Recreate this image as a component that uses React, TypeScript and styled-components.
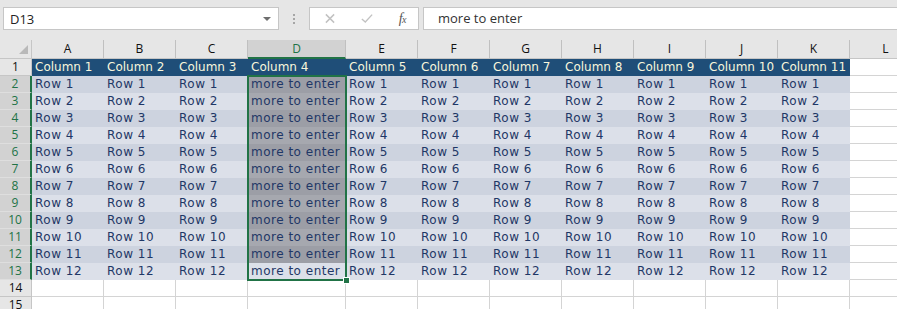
import styled, { createGlobalStyle } from "styled-components";

const GREEN = "#217346";

const GlobalStyle = createGlobalStyle`
  html, body {
    margin: 0;
    padding: 0;
    background: #ffffff;
    overflow: hidden;
  }
`;

const columns = ["A", "B", "C", "D", "E", "F", "G", "H", "I", "J", "K", "L"];
const tableColumns = 11;
const dataRows = 12;
const activeColumn = 3;

export default function App() {
  const rows = Array.from({ length: 15 }, (_, i) => i + 1);

  return (
    <>
      <GlobalStyle />
      <Window>
        <Toolbar>
          <NameBox>
            <NameText>D13</NameText>
            <DropArrow />
          </NameBox>
          <Splitter>
            <Dot />
            <Dot />
            <Dot />
          </Splitter>
          <FormulaButtons>
            <ToolIcon viewBox="0 0 12 12" aria-label={"Cancel"}>
              <path d="M1.5 1.5 L10.5 10.5 M10.5 1.5 L1.5 10.5" />
            </ToolIcon>
            <ToolIcon viewBox="0 0 14 12" aria-label={"Enter"}>
              <path d="M1 6.5 L5 10 L13 1.5" />
            </ToolIcon>
            <FxLabel>
              f<small>x</small>
            </FxLabel>
          </FormulaButtons>
          <FormulaInput>more to enter</FormulaInput>
        </Toolbar>

        <SheetArea>
          <Sheet>
            <Corner>
              <CornerTriangle />
            </Corner>
            {columns.map((c, i) => (
              <ColHeader key={c} $active={i === activeColumn}>
                {c}
              </ColHeader>
            ))}

            {rows.map((r) => {
              const inData = r >= 2 && r <= dataRows + 1;
              return [
                <RowHeader key={`h${r}`} $active={inData}>
                  {r}
                </RowHeader>,
                ...columns.map((c, ci) => {
                  const inTable = ci < tableColumns && r <= dataRows + 1;
                  if (!inTable) return <Cell key={`${c}${r}`} $tone={"blank"} />;
                  if (r === 1)
                    return (
                      <Cell key={`${c}${r}`} $tone={"head"}>
                        Column {ci + 1}
                      </Cell>
                    );
                  const tone = r % 2 === 0 ? "band1" : "band2";
                  const selected = ci === activeColumn && r !== dataRows + 1;
                  return (
                    <Cell key={`${c}${r}`} $tone={tone} $selected={selected}>
                      {ci === activeColumn ? "more to enter" : `Row ${r - 1}`}
                    </Cell>
                  );
                }),
              ];
            })}
          </Sheet>
          <Selection>
            <FillHandle />
          </Selection>
        </SheetArea>
      </Window>
    </>
  );
}

const Window = styled.div`
  width: 897px;
  height: 309px;
  overflow: hidden;
  background: #ffffff;
`;

const Toolbar = styled.div`
  height: 40px;
  box-sizing: border-box;
  padding: 7px 0 0 3px;
  display: flex;
  align-items: flex-start;
  background: #e6e6e6;
`;

const NameBox = styled.div`
  width: 276px;
  height: 23px;
  box-sizing: border-box;
  border: 1px solid #c6c6c6;
  background: #ffffff;
  display: flex;
  align-items: center;
  justify-content: space-between;
  padding: 0 7px 0 6px;
`;

const NameText = styled.span`
  font-family: "Open Sans", "Liberation Sans", sans-serif;
  font-size: 13px;
  color: #222222;
`;

const DropArrow = styled.span`
  width: 0;
  height: 0;
  border-left: 4px solid transparent;
  border-right: 4px solid transparent;
  border-top: 4px solid #6e6e6e;
  margin-top: 1px;
`;

const Splitter = styled.div`
  width: 30px;
  height: 23px;
  display: flex;
  flex-direction: column;
  align-items: center;
  justify-content: center;
  gap: 2px;
`;

const Dot = styled.span`
  width: 2px;
  height: 2px;
  background: #a6a6a6;
`;

const FormulaButtons = styled.div`
  width: 110px;
  height: 23px;
  box-sizing: border-box;
  border: 1px solid #c6c6c6;
  background: #ffffff;
  display: flex;
  align-items: center;
  justify-content: space-between;
  padding: 0 12px 0 14px;
`;

const ToolIcon = styled.svg`
  width: 12px;
  height: 11px;
  fill: none;
  stroke: #c2c2c2;
  stroke-width: 1.6;
`;

const FxLabel = styled.span`
  font-family: "Liberation Serif", serif;
  font-style: italic;
  font-size: 14px;
  color: #555555;
  letter-spacing: -0.5px;

  small {
    font-size: 10px;
  }
`;

const FormulaInput = styled.div`
  flex: 1;
  margin-left: 4px;
  height: 23px;
  box-sizing: border-box;
  border: 1px solid #c6c6c6;
  border-right: 0;
  background: #ffffff;
  padding-left: 14px;
  font-family: "Open Sans", "Liberation Sans", sans-serif;
  font-size: 13px;
  line-height: 21px;
  color: #333333;
`;

const SheetArea = styled.div`
  position: relative;
`;

const Sheet = styled.div`
  display: grid;
  grid-template-columns: 32px repeat(3, 72px) 98px repeat(7, 72px) 72px;
  grid-template-rows: 19px repeat(15, 17px);
  width: max-content;
`;

const Corner = styled.div`
  box-sizing: border-box;
  background: #e6e6e6;
  border-right: 1px solid #c6c6c6;
  border-bottom: 1px solid #c6c6c6;
  display: flex;
  align-items: flex-end;
  justify-content: flex-end;
  padding: 0 3px 4px 0;
`;

const CornerTriangle = styled.span`
  width: 0;
  height: 0;
  border-left: 9px solid transparent;
  border-bottom: 9px solid #b9b9b9;
`;

const ColHeader = styled.div<{ $active?: boolean }>`
  box-sizing: border-box;
  background: ${(p) => (p.$active ? "#d2d2d2" : "#e6e6e6")};
  color: ${(p) => (p.$active ? GREEN : "#111111")};
  border-right: 1px solid #c0c0c0;
  border-bottom: ${(p) => (p.$active ? `2px solid ${GREEN}` : "1px solid #c6c6c6")};
  font-family: "Open Sans", "Liberation Sans", sans-serif;
  font-size: 12px;
  line-height: 18px;
  text-align: center;
`;

const RowHeader = styled.div<{ $active?: boolean }>`
  box-sizing: border-box;
  background: ${(p) => (p.$active ? "#d2d2d2" : "#e6e6e6")};
  color: ${(p) => (p.$active ? GREEN : "#111111")};
  border-right: ${(p) => (p.$active ? `2px solid ${GREEN}` : "1px solid #c6c6c6")};
  border-bottom: 1px solid ${(p) => (p.$active ? "#dedede" : "#c6c6c6")};
  font-family: "Open Sans", "Liberation Sans", sans-serif;
  font-size: 12px;
  line-height: 16px;
  text-align: center;
`;

const tones = {
  head: { bg: "#1f4e78", fg: "#f8f6dc", sel: "#1f4e78" },
  band1: { bg: "#cdd3df", fg: "#1f3766", sel: "#9c9ea6" },
  band2: { bg: "#dce0e9", fg: "#1f3766", sel: "#a6a8af" },
  blank: { bg: "#ffffff", fg: "#1f3766", sel: "#ffffff" },
};

const Cell = styled.div<{ $tone: keyof typeof tones; $selected?: boolean }>`
  box-sizing: border-box;
  background: ${(p) => (p.$selected ? tones[p.$tone].sel : tones[p.$tone].bg)};
  color: ${(p) => tones[p.$tone].fg};
  border-right: ${(p) => (p.$tone === "blank" ? "1px solid #d4d4d4" : "0")};
  border-bottom: ${(p) => (p.$tone === "blank" ? "1px solid #d4d4d4" : "0")};
  padding-left: 3px;
  font-family: "DejaVu Sans", Verdana, sans-serif;
  font-size: 12px;
  letter-spacing: ${(p) => (p.$tone === "head" ? "0" : "0.5px")};
  line-height: 17px;
  white-space: nowrap;
  overflow: hidden;
`;

const Selection = styled.div`
  position: absolute;
  left: 247px;
  top: 35px;
  width: 100px;
  height: 206px;
  box-sizing: border-box;
  border: 2px solid ${GREEN};
  pointer-events: none;
`;

const FillHandle = styled.span`
  position: absolute;
  right: -5px;
  bottom: -5px;
  width: 5px;
  height: 5px;
  background: ${GREEN};
  border: 1px solid #ffffff;
`;
